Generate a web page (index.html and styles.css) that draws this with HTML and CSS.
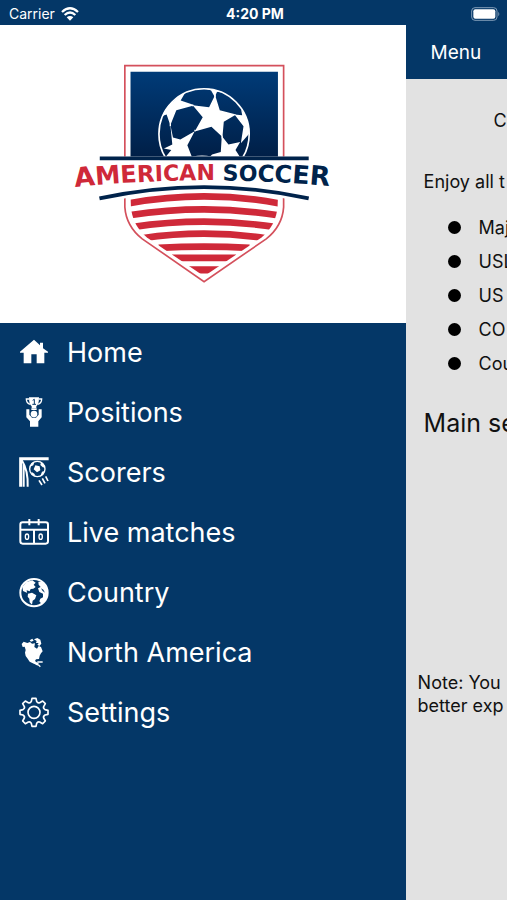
FILE: index.html
```html
<!DOCTYPE html>
<html lang="en">
<head>
<meta charset="utf-8">
<meta name="viewport" content="width=device-width, initial-scale=1">
<title>American Soccer</title>
<link rel="stylesheet" href="styles.css">
</head>
<body>
<header class="status">
  <div class="status-carrier">
    <span>Carrier</span>
    <svg class="wifi" viewBox="0 0 54 42" aria-hidden="true">
      <path d="M3 15Q27-7 51 15M11 24Q27 9 43 24" fill="none" stroke="#fff" stroke-width="7"/>
      <path d="M17 31Q27 23 37 31L27 41Z" fill="#fff"/>
    </svg>
  </div>
  <strong class="status-time">4:20 PM</strong>
  <svg class="battery" viewBox="0 0 90 42" aria-hidden="true">
    <rect x="2" y="2" width="76" height="38" rx="10" fill="none" stroke="#7f9bb6" stroke-width="3"/>
    <rect x="7" y="7" width="66" height="28" rx="6" fill="#fff"/>
    <path d="M82 14q6 7 0 14z" fill="#7f9bb6"/>
  </svg>
</header>
<div class="screen">
  <aside class="drawer">
    <div class="brand">
      <svg class="logo" viewBox="0 0 825 705" role="img" aria-label="American Soccer">
        <defs>
          <linearGradient id="sky" x1="0" y1="0" x2="0" y2="1">
            <stop offset="0" stop-color="#003b78"/>
            <stop offset="1" stop-color="#001f47"/>
          </linearGradient>
          <clipPath id="half"><rect x="270" y="90" width="292" height="214"/></clipPath>
          <clipPath id="ball"><circle cx="416" cy="236" r="136"/></clipPath>
          <clipPath id="shield"><path d="M195 395H638L636 452Q632 510 588 546L416 662L245 546Q201 510 197 452Z"/></clipPath>
          <path id="baseline" d="M30 395Q416 355 820 395"/>
        </defs>
        <path d="M179 304V32H654V304M179 418V455Q183 512 231 550L416 678L602 550Q650 512 654 455V418" fill="none" stroke="#d4505c" stroke-width="5"/>
        <path d="M196 50H637V304H196Z" fill="url(#sky)"/>
        <g clip-path="url(#half)">
          <g clip-path="url(#ball)" fill="#fff">
            <path d="M449 120L463 165L512 178L475 200L471 245L438 215L388 229L412 186L382 150L431 156Z"/>
            <path d="M365 103L346 136L388 150L333 165L315 210L304 178L286 184L300 150L325 138Z"/>
            <path d="M315 208L323 247L345 253L388 228L366 270L380 306H300L318 284L296 280L321 268Z"/>
            <path d="M469 242L489 268L524 260L510 284L524 306H432L440 298L466 290Z"/>
            <path d="M507 178L530 180L527 164L545 187L556 230L526 264L534 213Z"/>
            <path d="M405 95L437 106L448 126L455 110L480 113L443 94Z"/>
            <path d="M382 304Q410 297 438 304V310H382Z"/>
          </g>
          <path d="M315 205V213M384 151H380M388 228L390 224M470 241V250M449 118V126" stroke="#fff" stroke-width="4"/>
          <circle cx="416" cy="236" r="135" fill="none" stroke="#fff" stroke-width="5"/>
        </g>
        <path d="M104 309H729" stroke="#00234b" stroke-width="11"/>
        <g clip-path="url(#shield)" fill="none" stroke="#cf2939" stroke-width="20">
          <path d="M190 444Q416 402 642 444"/>
          <path d="M190 480Q416 444 642 480"/>
          <path d="M200 515Q416 482 632 515"/>
          <path d="M230 548Q416 521 602 548"/>
          <path d="M280 577Q416 570 552 577"/>
          <path d="M320 607H512"/>
          <path d="M360 643H472" stroke-width="22"/>
        </g>
        <path d="M103 429Q416 361 729 429" fill="none" stroke="#fff" stroke-width="28"/>
        <path d="M103 429Q416 361 729 429" fill="none" stroke="#00234b" stroke-width="11"/>
        <text class="logo-text"><textPath href="#baseline"><tspan class="red"><tspan class="s5">A</tspan><tspan class="s4">M</tspan><tspan class="s3">E</tspan><tspan class="s2">R</tspan><tspan class="s1">ICAN</tspan></tspan><tspan class="s1"> </tspan><tspan class="navy"><tspan class="s1">SO</tspan><tspan class="s2">C</tspan><tspan class="s3">C</tspan><tspan class="s4">E</tspan><tspan class="s5">R</tspan></tspan></textPath></text>
      </svg>
    </div>
    <nav class="menu" aria-label="Main">
      <a class="item" href="#home">
        <svg class="icon" viewBox="0 0 90 90" aria-hidden="true"><path d="M45 5L63 22V14H72V31L87 41V44H76V76H53V49H37V76H14V44H3V41Z" fill="#fff"/></svg>
        <span>Home</span>
      </a>
      <a class="item" href="#positions">
        <svg class="icon" viewBox="0 0 90 90" aria-hidden="true">
          <path d="M30-2H60Q60 20 52 25V31H38V25Q30 20 30-2Z" fill="#fff"/>
          <path d="M30 3H22Q22 16 34 19M60 3H68Q68 16 56 19" fill="none" stroke="#fff" stroke-width="4"/>
          <path d="M41 7L46 4V18M40 19H51" fill="none" stroke="#043767" stroke-width="3"/>
          <circle cx="45" cy="48" r="10" fill="#fff"/>
          <path d="M37 31H53V36H37Z" fill="#fff"/>
          <path d="M22 34H31V50L39 59H51L59 50V34H68V58L58 70V86H33V70L22 58Z" fill="#fff"/>
        </svg>
        <span>Positions</span>
      </a>
      <a class="item" href="#scorers">
        <svg class="icon" viewBox="0 0 90 90" aria-hidden="true">
          <path d="M5 86V2H89" fill="none" stroke="#fff" stroke-width="9"/>
          <path d="M8 6Q28 37 26 86M14 18V86" fill="none" stroke="#fff" stroke-width="6"/>
          <circle cx="55" cy="33" r="23" fill="none" stroke="#fff" stroke-width="4"/>
          <path d="M49 22L62 25L64 37L54 43L44 34ZM33 26L38 15L46 12L43 22ZM66 13L77 23L73 29L64 21ZM69 41L77 39L72 50L64 54ZM37 41L46 47L50 55L39 50Z" fill="#fff"/>
          <path d="M60 67L69 81M70 61L78 76M80 55L87 69" stroke="#fff" stroke-width="5"/>
        </svg>
        <span>Scorers</span>
      </a>
      <a class="item" href="#live">
        <svg class="icon" viewBox="0 0 90 90" aria-hidden="true">
          <g fill="none" stroke="#fff" stroke-width="6">
            <rect x="4" y="13" width="83" height="64" rx="7"/>
            <path d="M4 35H87M45 35V77M31 3V22M59 3V22" />
            <ellipse cx="24" cy="56" rx="5" ry="8" stroke-width="4"/>
            <ellipse cx="65" cy="56" rx="5" ry="8" stroke-width="4"/>
          </g>
        </svg>
        <span>Live matches</span>
      </a>
      <a class="item" href="#country">
        <svg class="icon" viewBox="0 0 90 90" aria-hidden="true">
          <circle cx="45" cy="44" r="41" fill="none" stroke="#fff" stroke-width="6"/>
          <path d="M10 27L22 12L40 7L50 14L44 20L50 27L43 32L35 33L32 40L23 37L24 44L30 47L12 39Z" fill="#fff"/>
          <path d="M27 47L39 44L52 52L48 63L41 68L39 80L32 73L31 62L26 56Z" fill="#fff"/>
          <path d="M58 11L70 12L84 31L86 48L79 68L68 78L61 70L64 62L72 58L72 47L61 42L57 31L65 27L59 20Z" fill="#fff"/>
          <path d="M66 31L73 35L78 44L71 39Z" fill="#043767"/>
        </svg>
        <span>Country</span>
      </a>
      <a class="item" href="#north-america">
        <svg class="icon" viewBox="0 0 90 90" aria-hidden="true">
          <path d="M8 18L14 11L25 15L33 12L39 17L48 16L46 27L54 32L59 24L66 27L71 40L66 46L62 53L60 63L51 64L48 69L53 73L60 75L55 80L46 78L32 71L25 61L20 54L18 44L20 36L17 26L11 27Z" fill="#fff"/>
          <path d="M32 7L40 2L44 8L36 11ZM45 4L55 0L64 5L67 17L61 24L55 20L59 15L51 15L53 9Z" fill="#fff"/>
          <path d="M55 72L71 72M50 78L59 81L64 86" fill="none" stroke="#fff" stroke-width="4"/>
        </svg>
        <span>North America</span>
      </a>
      <a class="item" href="#settings">
        <svg class="icon" viewBox="0 0 90 90" aria-hidden="true">
          <g transform="translate(45 43)" fill="none" stroke="#fff" stroke-width="5" stroke-linejoin="round">
            <path d="M33-8L42-6V6L33 8Q27 12 29 17L34 26L26 34L17 29Q11 27 8 33L6 42H-6L-8 33Q-11 27-17 29L-26 34L-34 26L-29 17Q-27 12-33 8L-42 6V-6L-33-8Q-27-12-29-17L-34-26L-26-34L-17-29Q-11-27-8-33L-6-42H6L8-33Q11-27 17-29L26-34L34-26L29-17Q27-12 33-8Z"/>
            <circle r="18"/>
          </g>
        </svg>
        <span>Settings</span>
      </a>
    </nav>
  </aside>
  <main class="page">
    <div class="bar"><button class="menu-button" type="button">Menu</button></div>
    <div class="content">
      <p class="welcome">C</p>
      <p class="intro">Enjoy all t</p>
      <ul class="leagues">
        <li>Maj</li>
        <li>USL</li>
        <li>US</li>
        <li>CO</li>
        <li>Cou</li>
      </ul>
      <h1 class="heading">Main se</h1>
      <p class="note">Note: You<br>better exp</p>
    </div>
  </main>
</div>
</body>
</html>
```
FILE: styles.css
```css
* {
  box-sizing: border-box;
}

body {
  margin: 0;
  min-height: 100vh;
  display: flex;
  flex-direction: column;
  font-family: Inter, "Liberation Sans", sans-serif;
  background: #043767;
  color: #111;
}

.status {
  display: grid;
  grid-template-columns: 1fr auto 1fr;
  align-items: center;
  height: 25px;
  padding: 2px 6px 0 9px;
  color: #fff;
  font-size: 14px;
}

.status-carrier {
  display: flex;
  align-items: center;
  gap: 6px;
}

.wifi {
  width: 18px;
  height: 14px;
}

.status-time {
  font-weight: 700;
}

.battery {
  width: 30px;
  height: 14px;
  justify-self: end;
}

.screen {
  flex: 1;
  display: grid;
  grid-template-columns: 4fr minmax(0, 1fr);
}

.brand {
  display: flex;
  justify-content: center;
  padding: 30px 0 32px;
  background: #fff;
}

.logo {
  width: 68%;
}

.logo-text {
  font-family: "DejaVu Sans", sans-serif;
  font-weight: 700;
}

.red { fill: #cf2939; }
.navy { fill: #00234b; }
.s1 { font-size: 66px; }
.s2 { font-size: 69px; }
.s3 { font-size: 72px; }
.s4 { font-size: 76px; }
.s5 { font-size: 80px; }

.item {
  display: flex;
  align-items: center;
  gap: 18px;
  height: 60px;
  padding-left: 19px;
  color: #fff;
  font-size: 27px;
  text-decoration: none;
}

.icon {
  width: 30px;
  height: 30px;
  overflow: visible;
}

.page {
  background: #e2e2e2;
  overflow: hidden;
  white-space: nowrap;
  font-size: 18px;
}

.bar {
  display: flex;
  align-items: center;
  height: 54px;
  padding-left: 25px;
  background: #043767;
}

.menu-button {
  padding: 0;
  border: 0;
  background: none;
  color: #fff;
  font: inherit;
  font-size: 19px;
}

.content {
  padding: 30px 0 0 18px;
}

.content p,
.heading {
  margin: 0;
  line-height: 23px;
}

.content .welcome {
  padding-left: 70px;
}

.content .intro {
  margin-top: 38px;
}

.leagues {
  margin: 17px 0 0;
  padding: 0 0 0 24px;
  list-style: none;
}

.leagues li {
  display: flex;
  align-items: center;
  gap: 18px;
  height: 34px;
}

.leagues li::before {
  content: "";
  flex: none;
  width: 13px;
  height: 13px;
  border-radius: 50%;
  background: #000;
}

.content .heading {
  margin-top: 32px;
  font-size: 25px;
  font-weight: 400;
}

.content .note {
  margin: 236px 0 0 -6px;
}
```
